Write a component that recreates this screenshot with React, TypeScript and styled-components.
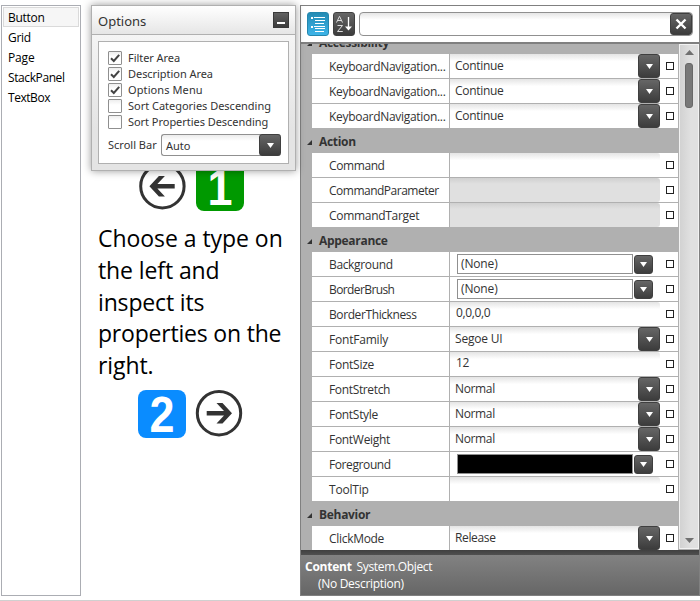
import React from "react";
import styled, { createGlobalStyle } from "styled-components";

const Global = createGlobalStyle`
  * { box-sizing: border-box; }
  body { margin: 0; background: #fff; }
`;

const Page = styled.div`
  width: 700px;
  height: 601px;
  padding: 5px 0 0 1px;
  display: flex;
  align-items: flex-start;
  overflow: hidden;
  border-bottom: 1px solid #d0d0d0;
  font: 12px/16px "Open Sans", "Noto Sans", sans-serif;
  color: #333;
  white-space: nowrap;
`;

const TypeList = styled.div`
  width: 80px;
  height: 591px;
  flex: none;
  border: 1px solid #abadb3;
  padding: 1px;
  color: #000;
`;

const TypeItem = styled.div<{ $selected?: boolean; $spacing: number }>`
  height: 20px;
  padding: 0 4px;
  border: 1px solid ${(p) => (p.$selected ? "#dadada" : "transparent")};
  background: ${(p) => (p.$selected ? "#f6f6f6" : "transparent")};
  line-height: 20px;
  letter-spacing: ${(p) => p.$spacing}px;
`;

const Guide = styled.div`
  width: 219px;
  height: 591px;
  flex: none;
  position: relative;
  padding: 158px 0 0 17px;
`;

const IconPair = styled.div<{ $indent: number; $gap: number }>`
  display: flex;
  gap: ${(p) => p.$gap}px;
  height: 49px;
  padding-left: ${(p) => p.$indent}px;
  svg { flex: none; overflow: visible; }
`;

const Message = styled.div`
  font-size: 23px;
  line-height: 31.8px;
  color: #000;
  margin: 11px 0 8px;
`;

const Line = styled.div<{ $spacing: number }>`
  letter-spacing: ${(p) => p.$spacing}px;
`;

const OptionsWindow = styled.div`
  position: absolute;
  left: 10px;
  top: 0;
  width: 205px;
  height: 166px;
  border: 1px solid #b0b0b0;
  background: linear-gradient(#fafafa, #e4e4e4 75%);
  box-shadow: 0 0 8px rgba(0, 0, 0, 0.4);
`;

const OptionsHeader = styled.div`
  height: 29px;
  display: flex;
  align-items: center;
  justify-content: space-between;
  padding: 0 5px 0 6px;
  border-bottom: 1px solid #b0b0b0;
  background: linear-gradient(#fff, #e6e6e6);
  font: 13px/28px "Noto Sans", sans-serif;
  letter-spacing: 0;
  padding-top: 2px;
`;

const Minimize = styled.div`
  width: 16px;
  height: 16px;
  margin: -3px 1px 0 0;
  display: flex;
  align-items: flex-end;
  justify-content: center;
  padding-bottom: 3px;
  background: linear-gradient(#616161, #3c3c3c);
  border: 1px solid #3a3a3a;
  &::after { content: ""; width: 8px; height: 2px; background: #fff; }
`;

const OptionsBody = styled.div`
  margin: 6px;
  height: 123px;
  border: 1px solid #b0b0b0;
  background: #fff;
  padding: 9px 7px 0 9px;
  font: 11px/14px "Noto Sans", sans-serif;
`;

const Option = styled.div<{ $spacing: number }>`
  height: 16px;
  display: flex;
  gap: 6px;
  letter-spacing: ${(p) => p.$spacing}px;
`;

const CheckBox = styled.div`
  width: 14px;
  height: 14px;
  border: 1px solid #8f8f8f;
  border-radius: 1px;
  background: linear-gradient(#eee, #fff 40%);
  svg { display: block; }
`;

const ScrollOption = styled.div`
  display: flex;
  align-items: center;
  justify-content: space-between;
  height: 22px;
  margin-top: 3px;
  letter-spacing: 0;
`;

const Combo = styled.div`
  width: 120px;
  height: 22px;
  display: flex;
  justify-content: space-between;
  border: 1px solid #909090;
  border-right: 0;
  border-radius: 3px;
  background: linear-gradient(#ececec, #fff 30%);
  padding-left: 4px;
  line-height: 21px;
`;

const DropButton = styled.div<{ $w: number; $h: number; $outset?: boolean }>`
  width: ${(p) => p.$w}px;
  height: ${(p) => p.$h}px;
  flex: none;
  margin: ${(p) => (p.$outset ? "-1px 0" : "0")};
  display: flex;
  align-items: center;
  justify-content: center;
  border: 1px solid #3f3f3f;
  border-radius: 3px;
  background: linear-gradient(#666, #3c3c3c);
`;

const Panel = styled.div`
  width: 400px;
  height: 591px;
  flex: none;
  display: flex;
  flex-direction: column;
  border: 1px solid #808080;
`;

const Toolbar = styled.div`
  height: 38px;
  flex: none;
  display: flex;
  gap: 4px;
  padding: 6px 6px 0;
  border-bottom: 2px solid #808080;
`;

const ToolButton = styled.div<{ $active?: boolean }>`
  width: 22px;
  height: 24px;
  border-radius: 3px;
  border: 1px solid ${(p) => (p.$active ? "#2487ae" : "#404040")};
  background: ${(p) => (p.$active ? "linear-gradient(#248bb4, #3db4e8)" : "linear-gradient(#666, #3c3c3c)")};
  svg { display: block; }
`;

const Search = styled.div`
  flex: 1;
  height: 24px;
  display: flex;
  justify-content: flex-end;
  border: 1px solid #909090;
  border-radius: 4px;
  background: linear-gradient(#e6e6e6, #fff 30%);
`;

const Body = styled.div`
  height: 506px;
  flex: none;
  display: flex;
  overflow: hidden;
  background: #b0b0b0;
`;

const Rows = styled.div`
  width: 378px;
  flex: none;
  margin-top: -14px;
  border-right: 1px solid #b0b0b0;
`;

const Category = styled.div<{ $spacing: number }>`
  height: 24px;
  display: flex;
  align-items: center;
  gap: 7px;
  padding: 2px 0 0 6px;
  font-weight: 700;
  letter-spacing: ${(p) => p.$spacing}px;
  svg { margin-top: 1px; }
`;

const Row = styled.div`
  height: 25px;
  margin-left: 11px;
  display: flex;
  border-bottom: 1px solid #b0b0b0;
  background: #fff;
`;

const Name = styled.div<{ $spacing: number }>`
  width: 138px;
  flex: none;
  border-right: 1px solid #b0b0b0;
  padding-left: 17px;
  line-height: 26px;
  height: 24px;
  letter-spacing: ${(p) => p.$spacing}px;
`;

const Field = styled.div<{ $disabled?: boolean; $inset: number; $spacing: number; $line: number }>`
  width: 210px;
  height: 24px;
  flex: none;
  display: flex;
  justify-content: space-between;
  padding-left: ${(p) => p.$inset}px;
  line-height: ${(p) => p.$line}px;
  letter-spacing: ${(p) => p.$spacing}px;
  border-radius: 0 3px 3px 0;
  background: ${(p) => (p.$disabled ? "linear-gradient(#d0d0d0, #e0e0e0 25%)" : "linear-gradient(#e4e4e4, #fff 30%)")};
`;

const BrushField = styled.div`
  width: 210px;
  height: 24px;
  flex: none;
  display: flex;
  gap: 1px;
  padding: 2px 0 0 7px;
`;

const Swatch = styled.div<{ $fill: string }>`
  width: 176px;
  height: 20px;
  border: 1px solid #909090;
  background: ${(p) => p.$fill};
  padding-left: 3px;
  line-height: 18px;
  letter-spacing: -0.15px;
`;

const BrushButton = styled.div`
  padding-top: 1px;
`;

const Marker = styled.div`
  width: 8px;
  height: 8px;
  margin: 8px 0 0 6px;
  border: 1px solid #222;
`;

const ScrollBar = styled.div`
  width: 20px;
  margin-bottom: 1px;
  flex: none;
  display: flex;
  flex-direction: column;
  align-items: center;
  border: 1px solid #f2f2f2;
  background: linear-gradient(90deg, #d2d2d2, #e0e0e0 60%);
  padding: 5px 0;
  svg { display: block; flex: none; }
`;

const Thumb = styled.div`
  width: 8px;
  height: 45px;
  margin: 8px 0 auto;
  border: 1px solid #686868;
  border-radius: 3px;
  background: #787878;
`;

const Description = styled.div`
  flex: 1;
  background: linear-gradient(#404040, #505050 5px, #828282 5px, #666);
  color: #fff;
  padding: 8px 4px 0;
  line-height: 18px;
`;

const DescriptionTitle = styled.div`
  display: flex;
  gap: 5px;
  height: 17px;
  letter-spacing: -0.35px;
  b { letter-spacing: -0.25px; }
`;

const DescriptionText = styled.div`
  padding-left: 13px;
  letter-spacing: -0.3px;
`;

const Triangle = ({ w = 7, h = 5, up = false, fill = "#fff" }) => (
  <svg width={w} height={h} viewBox="0 0 8 5" preserveAspectRatio="none">
    <path d={up ? "M0 5 4 0 8 5z" : "M0 0h8L4 5z"} fill={fill} />
  </svg>
);

const ArrowCircle = ({ right = false }) => (
  <svg width="48" height="48" viewBox="0 0 48 48">
    <g transform={right ? undefined : "translate(46.4 0) scale(-1 1)"}>
      <circle cx="23" cy="23.2" r="21.7" fill="none" stroke="#333" strokeWidth="3" />
      <path d="M10.7 21h17.3l-7.5-8h6L36 23.2 26.5 33.5h-6l7.5-8H10.7z" fill="#333" />
    </g>
  </svg>
);

const NumberTile = ({ n, fill }: { n: string; fill: string }) => (
  <svg width="48" height="48" viewBox="0 0 48 48">
    <rect width="48" height="48" rx="8" fill={fill} />
    <text x="24" y="41.5" textAnchor="middle" fill="#fff" fontFamily="Liberation Sans, sans-serif" fontWeight="700" fontSize="50" textLength="25" lengthAdjust="spacingAndGlyphs">
      {n}
    </text>
  </svg>
);

const Drop = ({ w = 22, h = 24, outset = false }) => (
  <DropButton $w={w} $h={h} $outset={outset}>
    <Triangle />
  </DropButton>
);

type Kind = "combo" | "text" | "disabled" | "brush";
type Prop = { name: string; s: number; kind: Kind; value?: string; vs?: number };

const groups: { title: string; s: number; props: Prop[] }[] = [
  {
    title: "Accessibility",
    s: -0.3,
    props: [1, 2, 3].map(() => ({ name: "KeyboardNavigation...", s: -0.3, kind: "combo" as Kind, value: "Continue", vs: -0.3 })),
  },
  {
    title: "Action",
    s: -0.3,
    props: [
      { name: "Command", s: -0.4, kind: "text" },
      { name: "CommandParameter", s: -0.5, kind: "disabled" },
      { name: "CommandTarget", s: -0.3, kind: "disabled" },
    ],
  },
  {
    title: "Appearance",
    s: -0.3,
    props: [
      { name: "Background", s: -0.35, kind: "brush", value: "(None)" },
      { name: "BorderBrush", s: -0.6, kind: "brush", value: "(None)" },
      { name: "BorderThickness", s: -0.4, kind: "text", value: "0,0,0,0", vs: -0.35 },
      { name: "FontFamily", s: -0.2, kind: "combo", value: "Segoe UI", vs: -0.2 },
      { name: "FontSize", s: -0.25, kind: "text", value: "12", vs: -0.3 },
      { name: "FontStretch", s: -0.35, kind: "combo", value: "Normal", vs: -0.35 },
      { name: "FontStyle", s: -0.3, kind: "combo", value: "Normal", vs: -0.35 },
      { name: "FontWeight", s: -0.3, kind: "combo", value: "Normal", vs: -0.35 },
      { name: "Foreground", s: -0.4, kind: "brush" },
      { name: "ToolTip", s: -0.2, kind: "text" },
    ],
  },
  { title: "Behavior", s: -0.3, props: [{ name: "ClickMode", s: -0.3, kind: "combo", value: "Release", vs: -0.35 }] },
];

const Editor = ({ p }: { p: Prop }) =>
  p.kind === "brush" ? (
    <BrushField>
      <Swatch $fill={p.value ? "#fff" : "#000"}>{p.value}</Swatch>
      <BrushButton>
        <Drop w={19} h={19} />
      </BrushButton>
    </BrushField>
  ) : (
    <Field $disabled={p.kind === "disabled"} $inset={p.kind === "combo" ? 5 : 6} $spacing={p.vs ?? 0} $line={p.kind === "combo" ? 24 : 22}>
      <span>{p.value}</span>
      {p.kind === "combo" && <Drop />}
    </Field>
  );

const types = [
  { name: "Button", s: -0.3 },
  { name: "Grid", s: -0.3 },
  { name: "Page", s: -0.15 },
  { name: "StackPanel", s: -0.4 },
  { name: "TextBox", s: -0.45 },
];

const options = [
  { label: "Filter Area", on: true, s: -0.05 },
  { label: "Description Area", on: true, s: -0.05 },
  { label: "Options Menu", on: true, s: 0.1 },
  { label: "Sort Categories Descending", on: false, s: -0.02 },
  { label: "Sort Properties Descending", on: false, s: -0.04 },
];

const message = [
  { text: "Choose a type on", s: -0.05 },
  { text: "the left and", s: -0.1 },
  { text: "inspect its", s: -0.15 },
  { text: "properties on the", s: -0.2 },
  { text: "right.", s: -0.1 },
];

export default function App() {
  return (
    <>
      <Global />
      <Page>
        <TypeList>
          {types.map((t, i) => (
            <TypeItem key={t.name} $selected={i === 0} $spacing={t.s}>
              {t.name}
            </TypeItem>
          ))}
        </TypeList>
        <Guide>
          <IconPair $indent={41} $gap={9}>
            <ArrowCircle />
            <NumberTile n="1" fill="#090" />
          </IconPair>
          <Message>
            {message.map((m) => (
              <Line key={m.text} $spacing={m.s}>
                {m.text}
              </Line>
            ))}
          </Message>
          <IconPair $indent={40} $gap={9.5}>
            <NumberTile n="2" fill="#0a8cff" />
            <ArrowCircle right />
          </IconPair>
          <OptionsWindow>
            <OptionsHeader>
              <span>Options</span>
              <Minimize />
            </OptionsHeader>
            <OptionsBody>
              {options.map((o) => (
                <Option key={o.label} $spacing={o.s}>
                  <CheckBox>
                    {o.on && (
                      <svg width="12" height="12" viewBox="0 0 12 12">
                        <path d="M2 6.2 4.8 9 10.2 2.8" fill="none" stroke="#444" strokeWidth="2" />
                      </svg>
                    )}
                  </CheckBox>
                  <span>{o.label}</span>
                </Option>
              ))}
              <ScrollOption>
                <span>Scroll Bar</span>
                <Combo>
                  <span>Auto</span>
                  <Drop h={22} outset />
                </Combo>
              </ScrollOption>
            </OptionsBody>
          </OptionsWindow>
        </Guide>
        <Panel>
          <Toolbar>
            <ToolButton $active>
              <svg width="20" height="22" viewBox="0 0 20 22" shapeRendering="crispEdges">
                <path d="M3 4h2v2H3zM6 4h11v1H6zM7 7h10v1H7zM7 10h9v1H7zM3 13h2v2H3zM6 13h11v1H6zM7 15h10v1H7zM7 18h9v1H7z" fill="#fff" />
              </svg>
            </ToolButton>
            <ToolButton>
              <svg width="20" height="22" viewBox="0 0 20 22">
                <path d="M2.5 9.5 5.5 3.3 8.5 9.5M3.6 7.5h3.8M3.5 12.5h5l-5 6h5.3" fill="none" stroke="#dcdcdc" strokeWidth="1" />
                <path d="M14.5 4v11" stroke="#fff" strokeWidth="1.3" />
                <path d="M11 13.5h7l-3.5 4z" fill="#fff" />
              </svg>
            </ToolButton>
            <Search>
              <DropButton $w={22} $h={22}>
                <svg width="12" height="12" viewBox="0 0 12 12">
                  <path d="M1.5 1.5l9 9M10.5 1.5l-9 9" stroke="#fff" strokeWidth="2.4" />
                </svg>
              </DropButton>
            </Search>
          </Toolbar>
          <Body>
            <Rows>
              {groups.map((g) => (
                <React.Fragment key={g.title}>
                  <Category $spacing={g.s}>
                    <svg width="5" height="5" viewBox="0 0 5 5">
                      <path d="M5 0v5H0z" fill="#333" />
                    </svg>
                    {g.title}
                  </Category>
                  {g.props.map((p, i) => (
                    <Row key={i}>
                      <Name $spacing={p.s}>{p.name}</Name>
                      <Editor p={p} />
                      <Marker />
                    </Row>
                  ))}
                </React.Fragment>
              ))}
            </Rows>
            <ScrollBar>
              <Triangle w={9} h={5} up fill="#707070" />
              <Thumb />
              <Triangle w={9} h={5} fill="#707070" />
            </ScrollBar>
          </Body>
          <Description>
            <DescriptionTitle>
              <b>Content</b>
              <span>System.Object</span>
            </DescriptionTitle>
            <DescriptionText>(No Description)</DescriptionText>
          </Description>
        </Panel>
      </Page>
    </>
  );
}
